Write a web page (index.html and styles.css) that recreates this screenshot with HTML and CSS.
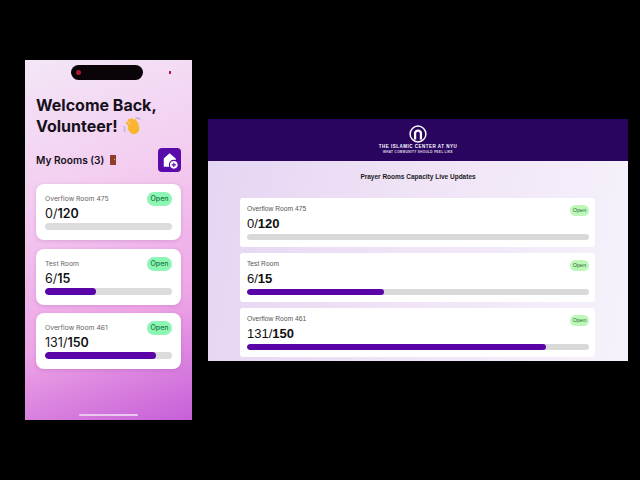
FILE: index.html
```html
<!DOCTYPE html>
<html>
<head>
    <meta charset="UTF-8">
    <title>Prayer Rooms Capacity</title>
    <link rel="stylesheet" href="styles.css">
</head>
<body>
    <div class="stage">
        <div class="phone">
            <div class="notch"><span class="camera"></span></div>
            <span class="status-dot"></span>
            <h1>Welcome Back,<br>Volunteer!
                <svg class="wave" viewBox="0 0 20 20">
                    <path d="M4.5 6.5 L10 12 M6.5 3.5 L12 9.5 M9.5 2.5 L14 8 M13 3.5 L16 8.5" stroke="#f9b52e" stroke-width="2.8" stroke-linecap="round"/>
                    <path d="M7 9.5 L15 5 L18 11 C19 16 15 19.5 11 19 C8 18.5 6 15 5 12 Z" fill="#f9b52e"/>
                    <path d="M1 10 L2.5 14 M0.5 13.5 L3 17" stroke="#8fa3c8" stroke-width="0.9" fill="none"/>
                    <path d="M14 0.5 L18 2.5 M16.5 0 L19.5 3" stroke="#8fa3c8" stroke-width="0.9" fill="none"/>
                </svg>
            </h1>
            <div class="rooms-head">
                <span class="rooms-title">My Rooms (3)</span>
                <span class="door"><span class="knob"></span></span>
                <span class="add-btn">
                    <svg viewBox="0 0 24 24" width="23" height="23">
                        <path d="M12 4.5 L18.5 10 V18.5 H6 V10 Z" fill="#fff"/>
                        <circle cx="16.5" cy="16.5" r="4.6" fill="#fff" stroke="#5a0aa8" stroke-width="1.2"/>
                        <path d="M14.3 16.5 H18.7 M16.5 14.3 V18.7" stroke="#5a0aa8" stroke-width="1.2"/>
                    </svg>
                </span>
            </div>
            <div class="phone-card">
                <div class="card-top"><span class="room-name">Overflow Room 475</span><span class="pill">Open</span></div>
                <div class="count">0/<b>120</b></div>
                <div class="bar"></div>
            </div>
            <div class="phone-card">
                <div class="card-top"><span class="room-name">Test Room</span><span class="pill">Open</span></div>
                <div class="count">6/<b>15</b></div>
                <div class="bar"><div class="fill" style="width:40%"></div></div>
            </div>
            <div class="phone-card">
                <div class="card-top"><span class="room-name">Overflow Room 461</span><span class="pill">Open</span></div>
                <div class="count">131/<b>150</b></div>
                <div class="bar"><div class="fill" style="width:87.3%"></div></div>
            </div>
            <div class="home-line"></div>
        </div>

        <div class="web">
            <header>
                <svg class="logo" viewBox="0 0 20 20" width="18" height="18">
                    <circle cx="10" cy="10" r="8.8" fill="none" stroke="#fff" stroke-width="1.6"/>
                    <path d="M5.5 16 V9 C5.5 3.5 14.5 3.5 14.5 9 V16 H12 V9.5 C12 7 8 7 8 9.5 V16 Z" fill="#fff"/>
                </svg>
                <div class="org">THE ISLAMIC CENTER AT NYU</div>
                <div class="motto">WHAT COMMUNITY SHOULD FEEL LIKE</div>
            </header>
            <h2>Prayer Rooms Capacity Live Updates</h2>
            <div class="web-list">
                <div class="web-card">
                    <div class="card-top"><span class="web-name">Overflow Room 475</span><span class="web-pill">Open</span></div>
                    <div class="web-count">0/<b>120</b></div>
                    <div class="web-bar"></div>
                </div>
                <div class="web-card">
                    <div class="card-top"><span class="web-name">Test Room</span><span class="web-pill">Open</span></div>
                    <div class="web-count">6/<b>15</b></div>
                    <div class="web-bar"><div class="fill" style="width:40%"></div></div>
                </div>
                <div class="web-card">
                    <div class="card-top"><span class="web-name">Overflow Room 461</span><span class="web-pill">Open</span></div>
                    <div class="web-count">131/<b>150</b></div>
                    <div class="web-bar"><div class="fill" style="width:87.3%"></div></div>
                </div>
            </div>
        </div>
    </div>
</body>
</html>
```

FILE: styles.css
```css
body {
    margin: 0;
    background: #000;
}
.stage {
    width: 640px;
    height: 480px;
    display: flex;
    align-items: center;
    gap: 16px;
    padding-left: 25px;
    box-sizing: border-box;
    overflow: hidden;
}

/* phone */
.phone {
    position: relative;
    width: 167px;
    height: 360px;
    flex: none;
    box-sizing: border-box;
    padding: 35px 11px 0;
    background: linear-gradient(160deg, #f3e6f7 0%, #f3cdf0 35%, #eea5e6 70%, #c65fd8 100%);
    font-family: Inter, "Liberation Sans", sans-serif;
}
.notch {
    position: absolute;
    left: 46px;
    top: 5px;
    width: 72px;
    height: 15px;
    border-radius: 8px;
    background: #0a0308;
}
.camera {
    position: absolute;
    left: 5px;
    top: 5px;
    width: 5px;
    height: 5px;
    border-radius: 50%;
    background: #b0182e;
}
.status-dot {
    position: absolute;
    left: 144px;
    top: 11px;
    width: 2px;
    height: 3px;
    background: #b0185a;
}
h1 {
    margin: 0;
    font-size: 16px;
    line-height: 21px;
    font-weight: 700;
    color: #16101c;
}
.wave {
    width: 18px;
    height: 18px;
    margin-left: 1px;
    vertical-align: -3px;
}
.rooms-head {
    display: flex;
    align-items: center;
    margin-top: 11px;
    height: 24px;
}
.rooms-title {
    font-size: 10.2px;
    font-weight: 600;
    color: #16101c;
}
.door {
    position: relative;
    width: 6px;
    height: 10px;
    margin-left: 6px;
    background: #8f3a2c;
}
.knob {
    position: absolute;
    right: 1px;
    top: 4px;
    width: 1px;
    height: 1px;
    background: #e8b040;
}
.add-btn {
    display: flex;
    width: 23px;
    height: 24px;
    margin-left: auto;
    align-items: center;
    justify-content: center;
    border-radius: 4px;
    background: #5a0aa8;
}
.phone-card {
    box-sizing: border-box;
    height: 56px;
    margin-top: 12px;
    padding: 8px 9px;
    background: #fff;
    border-radius: 8px;
    box-shadow: 0 1px 4px rgba(120, 40, 140, 0.2);
}
.phone-card + .phone-card {
    margin-top: 8.5px;
}
.card-top {
    display: flex;
    justify-content: space-between;
    align-items: flex-start;
}
.room-name {
    font-size: 6.8px;
    line-height: 14px;
    color: #666;
}
.pill {
    width: 25px;
    height: 14px;
    border-radius: 7px;
    background: #8ff5b4;
    color: #157a45;
    font-size: 7px;
    font-weight: 500;
    line-height: 14px;
    text-align: center;
}
.count {
    font-size: 12.5px;
    line-height: 15px;
    color: #111;
}
.count b {
    font-weight: 600;
}
.bar {
    height: 7px;
    margin-top: 2px;
    border-radius: 4px;
    background: #dcdcdc;
    overflow: hidden;
}
.fill {
    height: 100%;
    border-radius: 4px;
    background: #5a04a8;
}
.home-line {
    position: absolute;
    left: 54px;
    bottom: 4px;
    width: 59px;
    height: 2px;
    border-radius: 1px;
    background: #e8c8ee;
}

/* web page */
.web {
    width: 420px;
    height: 242px;
    flex: none;
    overflow: hidden;
    background: linear-gradient(100deg, #e4d5f3 0%, #f0e4f6 50%, #f6f2fb 100%);
    font-family: "Liberation Sans", Arial, sans-serif;
}
header {
    height: 42px;
    box-sizing: border-box;
    padding-top: 6px;
    background: #2a0560;
    color: #fff;
    text-align: center;
}
.logo {
    display: block;
    margin: 0 auto;
}
.org {
    font-size: 4.5px;
    line-height: 6px;
    font-weight: 700;
    letter-spacing: 0.5px;
    margin-top: 1px;
}
.motto {
    font-size: 3px;
    line-height: 4px;
    font-weight: 700;
    letter-spacing: 0.4px;
    opacity: 0.85;
}
h2 {
    margin: 11px 0 0;
    font-size: 6.5px;
    line-height: 9px;
    font-weight: 700;
    text-align: center;
    color: #1a1a1a;
}
.web-list {
    display: flex;
    flex-direction: column;
    gap: 6px;
    margin: 17px 33px 0 32px;
}
.web-card {
    box-sizing: border-box;
    height: 49px;
    padding: 6px 6px 0 7px;
    background: #fff;
    border-radius: 3px;
}
.web-name {
    font-size: 6.7px;
    line-height: 9px;
    color: #555;
}
.web-pill {
    width: 19px;
    height: 11px;
    margin-top: 1px;
    border-radius: 6px;
    background: #bdf7b8;
    color: #1d6a35;
    font-size: 5.5px;
    line-height: 11px;
    text-align: center;
}
.web-count {
    font-size: 13px;
    line-height: 15px;
    color: #111;
}
.web-count b {
    font-weight: 700;
}
.web-bar {
    height: 6px;
    margin-top: 3px;
    border-radius: 3px;
    background: #d9d9d9;
    overflow: hidden;
}
```
